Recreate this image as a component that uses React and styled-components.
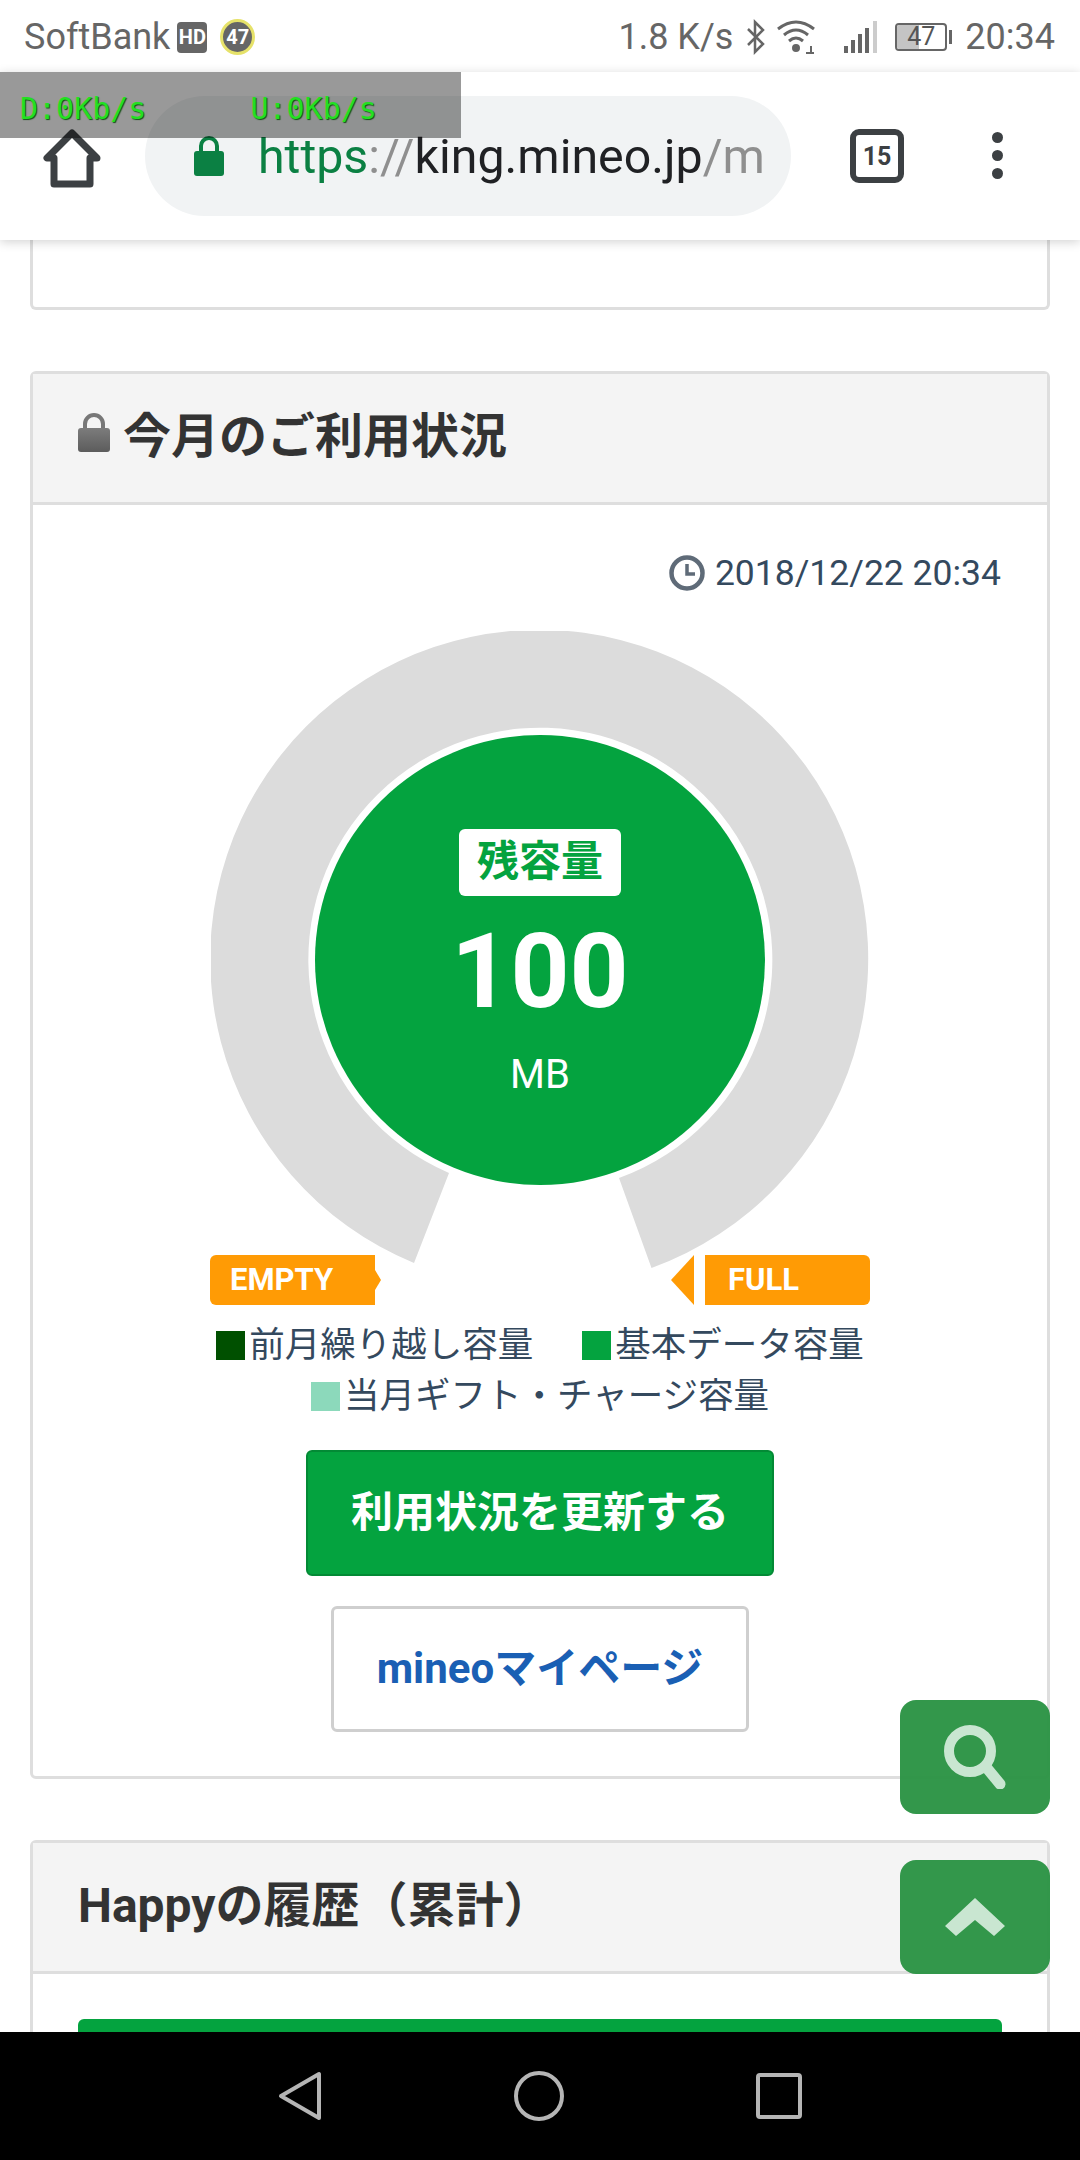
import React from 'react'
import styled, { createGlobalStyle } from 'styled-components'

const JP = `Roboto, "Noto Sans CJK JP", sans-serif`

const Global = createGlobalStyle`
  html, body { margin: 0; padding: 0; background: #fff; }
  * { box-sizing: border-box; }
`

const App = () => {
  return (
    <Phone>
      <Global />
      <StatusBar>
        <Carrier>SoftBank</Carrier>
        <HdBadge>HD</HdBadge>
        <DataRing>47</DataRing>
        <Spacer />
        <StatusText>1.8 K/s</StatusText>
        <svg width="22" height="36" viewBox="0 0 22 36" fill="none" stroke="#666" strokeWidth="2.5" style={{ marginLeft: 12 }}>
          <path d="M3 10 L18 25 L10 33 V3 L18 11 L3 26" />
        </svg>
        <svg width="40" height="36" viewBox="0 0 40 36" fill="none" stroke="#666" strokeWidth="3" style={{ marginLeft: 9 }}>
          <path d="M2 10 Q20 -4 38 10" />
          <path d="M8 16 Q20 6 32 16" />
          <path d="M13 22 Q20 16 27 22" />
          <circle cx="20" cy="29" r="2.5" fill="#666" />
          <path d="M30 34 h8 M35 27 v8" strokeWidth="2" />
        </svg>
        <svg width="34" height="36" viewBox="0 0 34 36" fill="#666" style={{ marginLeft: 28 }}>
          <rect x="0" y="27" width="4" height="7" />
          <rect x="7" y="21" width="4" height="13" />
          <rect x="14" y="15" width="4" height="19" />
          <rect x="21" y="9" width="4" height="25" />
          <rect x="29" y="2" width="4" height="32" fill="#ccc" />
        </svg>
        <Battery>
          <BatteryLevel />
          <BatteryText>47</BatteryText>
        </Battery>
        <BatteryCap />
        <StatusText $left={13}>20:34</StatusText>
      </StatusBar>

      <Toolbar>
        <HomeButton>
          <svg width="60" height="62" viewBox="0 0 60 62" fill="none" stroke="#3c4043" strokeWidth="7" strokeLinejoin="round">
            <path d="M30 5 L5 30 H12 V56 H48 V30 H55 Z" />
          </svg>
        </HomeButton>
        <UrlPill>
          <svg width="32" height="42" viewBox="0 0 32 42" style={{ flexShrink: 0 }}>
            <path d="M8 18 V11 a8 8 0 0 1 16 0 V18" fill="none" stroke="#0b8043" strokeWidth="4" />
            <rect x="1" y="16" width="30" height="25" rx="3" fill="#0b8043" />
          </svg>
          <Url>
            <UrlPart $color="#0b8043">https</UrlPart>
            <UrlPart $color="#8f8f8f">://</UrlPart>
            <UrlPart $color="#202124">king.mineo.jp</UrlPart>
            <UrlPart $color="#8f8f8f">/m</UrlPart>
          </Url>
        </UrlPill>
        <TabCount>15</TabCount>
        <MenuDots>
          <i />
          <i />
          <i />
        </MenuDots>
      </Toolbar>

      <SpeedMeter>
        <SpeedText>D:0Kb/s</SpeedText>
        <SpeedText>U:0Kb/s</SpeedText>
      </SpeedMeter>

      <Content>
        <PrevCard />

        <Card>
          <CardHeader>
            <svg width="32" height="40" viewBox="0 0 32 40">
              <defs>
                <linearGradient id="lockGrey" x1="0" y1="0" x2="0" y2="1">
                  <stop offset="0" stopColor="#7c7c7c" />
                  <stop offset="1" stopColor="#5c5c5c" />
                </linearGradient>
              </defs>
              <path d="M7 17 V11 a9 9 0 0 1 18 0 V17" fill="none" stroke="#777" strokeWidth="4" />
              <rect x="0" y="15" width="32" height="24" rx="3" fill="url(#lockGrey)" />
            </svg>
            <CardTitle>今月のご利用状況</CardTitle>
          </CardHeader>
          <CardBody>
            <TimeRow>
              <svg width="36" height="36" viewBox="0 0 36 36" fill="none" stroke="#5f6b78">
                <circle cx="18" cy="18" r="15.5" strokeWidth="4.5" />
                <path d="M18 9 V19 H26" strokeWidth="3.5" />
              </svg>
              <TimeText>2018/12/22 20:34</TimeText>
            </TimeRow>

            <Gauge>
              <svg width="658" height="640" viewBox="0 0 658 640" style={{ display: 'block' }}>
                <path
                  d="M203 632 A329 329 0 1 1 440.5 637 L408 547 A232 232 0 1 0 238 542 Z"
                  fill="#dcdcdc"
                />
              </svg>
              <Disc>
                <RemainBadge>残容量</RemainBadge>
                <RemainValue>100</RemainValue>
                <RemainUnit>MB</RemainUnit>
              </Disc>
            </Gauge>

            <GaugeLabels>
              <EndLabel>
                <EndTag $side="left">EMPTY</EndTag>
                <ArrowRight />
              </EndLabel>
              <EndLabel>
                <ArrowLeft />
                <EndTag $side="right">FULL</EndTag>
              </EndLabel>
            </GaugeLabels>

            <Legend>
              <LegendItem><Swatch $color="#005000" />前月繰り越し容量</LegendItem>
              <LegendItem><Swatch $color="#04a33f" />基本データ容量</LegendItem>
              <LegendItem><Swatch $color="#8cd9bb" />当月ギフト・チャージ容量</LegendItem>
            </Legend>

            <PrimaryButton>利用状況を更新する</PrimaryButton>
            <SecondaryButton>mineoマイページ</SecondaryButton>
          </CardBody>
        </Card>

        <Card>
          <CardHeader>
            <CardTitle>Happyの履歴（累計）</CardTitle>
          </CardHeader>
          <HistoryBody>
            <HistoryBar />
          </HistoryBody>
        </Card>
      </Content>

      <NavBar>
        <svg width="44" height="50" viewBox="0 0 44 50" fill="none" stroke="#b5b5b5" strokeWidth="4" strokeLinejoin="round">
          <path d="M41 3 V47 L3 25 Z" />
        </svg>
        <svg width="50" height="50" viewBox="0 0 50 50" fill="none" stroke="#b5b5b5" strokeWidth="4">
          <circle cx="25" cy="25" r="23" />
        </svg>
        <svg width="46" height="46" viewBox="0 0 46 46" fill="none" stroke="#b5b5b5" strokeWidth="4" strokeLinejoin="round">
          <rect x="2" y="2" width="42" height="42" rx="2" />
        </svg>
      </NavBar>

      <FabStack>
        <Fab>
          <svg width="62" height="64" viewBox="0 0 62 64" fill="none" stroke="#c9e6d1" strokeLinecap="round">
            <circle cx="26" cy="26" r="21" strokeWidth="10" />
            <path d="M42 42 L56 59" strokeWidth="11" />
          </svg>
        </Fab>
        <Fab>
          <svg width="60" height="38" viewBox="0 0 60 38" fill="#c9e6d1">
            <path d="M30 0 L60 28 L49 38 L30 22 L11 38 L0 28 Z" />
          </svg>
        </Fab>
      </FabStack>
    </Phone>
  )
}

export default App

const Phone = styled.div`
  position: relative;
  width: 1080px;
  height: 2160px;
  overflow: hidden;
  display: flex;
  flex-direction: column;
  background: #fff;
  font-family: ${JP};
`

const StatusBar = styled.div`
  height: 72px;
  flex-shrink: 0;
  display: flex;
  align-items: center;
  padding: 2px 25px 0 24px;
  color: #666;
  background: #fff;
`

const Carrier = styled.span`
  font-size: 36px;
`

const HdBadge = styled.span`
  width: 30px;
  height: 31px;
  margin-left: 7px;
  border-radius: 4px;
  background: #666;
  color: #fff;
  font-size: 20px;
  font-weight: 700;
  display: flex;
  align-items: center;
  justify-content: center;
`

const DataRing = styled.span`
  width: 35px;
  height: 36px;
  margin-left: 13px;
  border-radius: 50%;
  background: #666;
  border: 3px solid #e6e26a;
  color: #fff;
  font-size: 20px;
  font-weight: 700;
  display: flex;
  align-items: center;
  justify-content: center;
`

const Spacer = styled.div`
  flex: 1;
`

const StatusText = styled.span`
  font-size: 36px;
  margin-left: ${p => p.$left || 0}px;
`

const Battery = styled.div`
  position: relative;
  width: 52px;
  height: 28px;
  margin-left: 17px;
  border: 2px solid #666;
  border-radius: 4px;
  overflow: hidden;
`

const BatteryLevel = styled.div`
  width: 45%;
  height: 100%;
  background: #c4c4c4;
`

const BatteryText = styled.span`
  position: absolute;
  inset: 0;
  text-align: center;
  font-size: 25px;
  line-height: 24px;
  color: #555;
`

const BatteryCap = styled.div`
  width: 3px;
  height: 14px;
  margin-left: 2px;
  background: #666;
`

const Toolbar = styled.div`
  position: relative;
  z-index: 2;
  height: 168px;
  flex-shrink: 0;
  display: flex;
  align-items: flex-start;
  padding: 24px 0 0 0;
  background: #fff;
  box-shadow: 0 2px 10px rgba(0, 0, 0, 0.18);
`

const HomeButton = styled.div`
  width: 145px;
  height: 120px;
  padding: 32px 0 0 42px;
`

const UrlPill = styled.div`
  width: 646px;
  height: 120px;
  padding: 0 0 0 48px;
  border-radius: 60px;
  background: #f1f3f4;
  display: flex;
  align-items: center;
  overflow: hidden;
`

const Url = styled.div`
  margin-left: 33px;
  font-size: 48.3px;
  white-space: nowrap;
`

const UrlPart = styled.span`
  color: ${p => p.$color};
`

const TabCount = styled.div`
  width: 54px;
  height: 54px;
  margin: 33px 0 0 59px;
  border: 6px solid #3c4043;
  border-radius: 9px;
  color: #3c4043;
  font-size: 25px;
  font-weight: 700;
  display: flex;
  align-items: center;
  justify-content: center;
`

const MenuDots = styled.div`
  margin: 36px 0 0 88px;
  display: flex;
  flex-direction: column;
  gap: 7px;
  i {
    width: 11px;
    height: 11px;
    border-radius: 50%;
    background: #3c4043;
  }
`

const SpeedMeter = styled.div`
  position: absolute;
  z-index: 3;
  left: 0;
  top: 72px;
  width: 461px;
  height: 66px;
  padding: 20px 0 0 20px;
  background: rgba(0, 0, 0, 0.4);
  display: flex;
  gap: 104px;
`

const SpeedText = styled.span`
  font-family: "DejaVu Sans Mono", monospace;
  font-size: 30px;
  line-height: 34px;
  color: #22e022;
  text-shadow: 1px 1px 1px #145014;
`

const Content = styled.div`
  flex: 1;
  min-height: 0;
  overflow: hidden;
  padding: 0 30px;
  background: #fff;
`

const PrevCard = styled.div`
  height: 70px;
  border: 3px solid #dedede;
  border-top: none;
  border-radius: 0 0 6px 6px;
`

const Card = styled.section`
  margin-top: 61px;
  border: 3px solid #dedede;
  border-radius: 6px;
  background: #fff;
`

const CardHeader = styled.header`
  height: 131px;
  padding: 0 45px 10px;
  display: flex;
  align-items: center;
  gap: 13px;
  background: #f4f4f4;
  border-bottom: 3px solid #dedede;
`

const CardTitle = styled.h2`
  margin: -3px 0 0;
  font-size: 48px;
  font-weight: 700;
  color: #333;
`

const CardBody = styled.div`
  padding: 46px 46px 44px;
  display: flex;
  flex-direction: column;
  align-items: center;
`

const TimeRow = styled.div`
  align-self: flex-end;
  height: 44px;
  display: flex;
  align-items: center;
  gap: 10px;
`

const TimeText = styled.span`
  font-size: 35.5px;
  color: #34495e;
`

const Gauge = styled.div`
  position: relative;
  width: 658px;
  height: 624px;
  margin-top: 36px;
`

const Disc = styled.div`
  position: absolute;
  left: 104px;
  top: 104px;
  width: 450px;
  height: 450px;
  padding-top: 94px;
  border-radius: 50%;
  background: #04a33f;
  color: #fff;
  display: flex;
  flex-direction: column;
  align-items: center;
`

const RemainBadge = styled.div`
  width: 162px;
  height: 67px;
  border-radius: 6px;
  background: #fff;
  color: #04a33f;
  font-size: 42px;
  font-weight: 700;
  line-height: 66px;
  text-align: center;
`

const RemainValue = styled.div`
  margin-top: 15px;
  font-size: 103px;
  font-weight: 700;
  line-height: 122px;
`

const RemainUnit = styled.div`
  margin-top: 18px;
  font-size: 40px;
  line-height: 48px;
`

const GaugeLabels = styled.div`
  width: 660px;
  display: flex;
  justify-content: space-between;
`

const EndLabel = styled.div`
  display: flex;
  align-items: center;
`

const EndTag = styled.div`
  width: 165px;
  height: 50px;
  padding-left: ${p => (p.$side === 'left' ? 20 : 23)}px;
  border-radius: ${p => (p.$side === 'left' ? '6px 0 0 6px' : '0 6px 6px 0')};
  background: #ff9b05;
  color: #fff;
  font-size: 31px;
  font-weight: 700;
  line-height: 50px;
  margin-left: ${p => (p.$side === 'right' ? 11 : 0)}px;
`

const ArrowRight = styled.div`
  width: 0;
  height: 0;
  border-left: 6px solid #ff9b05;
  border-top: 10px solid transparent;
  border-bottom: 10px solid transparent;
  margin-right: 2px;
`

const ArrowLeft = styled.div`
  width: 0;
  height: 0;
  border-right: 23px solid #ff9b05;
  border-top: 25px solid transparent;
  border-bottom: 25px solid transparent;
`

const Legend = styled.div`
  width: 720px;
  margin-top: 15px;
  display: flex;
  flex-wrap: wrap;
  justify-content: center;
  column-gap: 49px;
  font-size: 35.5px;
  line-height: 51px;
  color: #34495e;
`

const LegendItem = styled.div`
  display: flex;
  align-items: center;
  white-space: nowrap;
`

const Swatch = styled.span`
  width: 29px;
  height: 29px;
  margin-right: 4px;
  background: ${p => p.$color};
`

const PrimaryButton = styled.button`
  width: 468px;
  height: 126px;
  margin-top: 28px;
  padding: 0 0 10px;
  border: 2px solid #038a35;
  border-radius: 6px;
  background: #04a33f;
  color: #fff;
  font-family: ${JP};
  font-size: 42px;
  font-weight: 700;
`

const SecondaryButton = styled.button`
  width: 418px;
  height: 126px;
  margin-top: 30px;
  padding: 0 0 10px;
  border: 3px solid #cfcfcf;
  border-radius: 6px;
  background: #fff;
  color: #1a5fb4;
  font-family: ${JP};
  font-size: 42px;
  font-weight: 700;
`

const HistoryBody = styled.div`
  padding: 45px 45px 0;
`

const HistoryBar = styled.div`
  height: 80px;
  border-radius: 6px;
  background: #04a33f;
`

const NavBar = styled.nav`
  position: relative;
  z-index: 2;
  height: 128px;
  flex-shrink: 0;
  padding: 0 278px 0 278px;
  background: #000;
  display: flex;
  align-items: center;
  justify-content: space-between;
`

const FabStack = styled.div`
  position: absolute;
  z-index: 1;
  right: 30px;
  top: 1700px;
  display: flex;
  flex-direction: column;
  gap: 46px;
`

const Fab = styled.div`
  width: 150px;
  height: 114px;
  border-radius: 16px;
  background: rgba(40, 145, 65, 0.95);
  display: flex;
  align-items: center;
  justify-content: center;
`
